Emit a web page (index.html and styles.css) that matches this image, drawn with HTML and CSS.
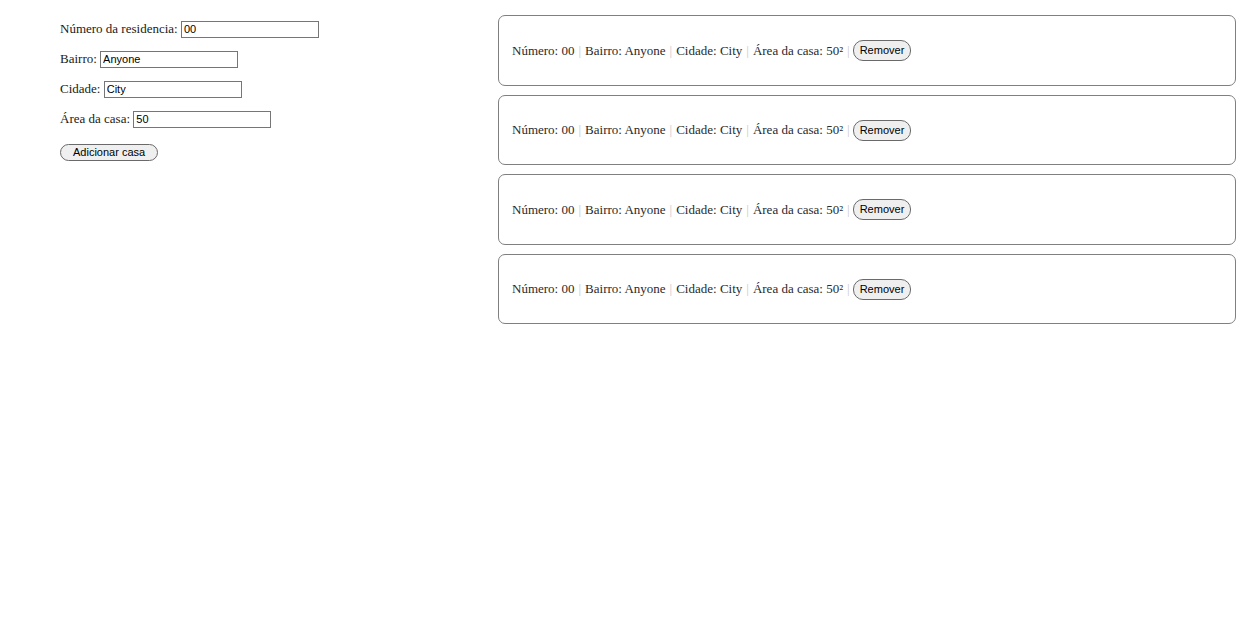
FILE: index.html
```html
<!DOCTYPE html>
<html lang="pt-BR">
<head>
<meta charset="utf-8">
<title>Casas</title>
<link rel="stylesheet" href="styles.css">
</head>
<body>
<div class="page">
  <form class="form">
    <p class="row"><label>Número da residencia: <input class="field" type="text" value="00"></label></p>
    <p class="row"><label>Bairro: <input class="field" type="text" value="Anyone"></label></p>
    <p class="row"><label>Cidade: <input class="field" type="text" value="City"></label></p>
    <p class="row"><label>Área da casa: <input class="field" type="text" value="50"></label></p>
    <p class="row row-btn"><button class="btn btn-add" type="button">Adicionar casa</button></p>
  </form>
  <div class="list">
    <div class="card"><span>Número: 00</span><span class="sep">|</span><span>Bairro: Anyone</span><span class="sep">|</span><span>Cidade: City</span><span class="sep">|</span><span>Área da casa: 50²</span><span class="sep sep-last">|</span><button class="btn" type="button">Remover</button></div>
    <div class="card"><span>Número: 00</span><span class="sep">|</span><span>Bairro: Anyone</span><span class="sep">|</span><span>Cidade: City</span><span class="sep">|</span><span>Área da casa: 50²</span><span class="sep sep-last">|</span><button class="btn" type="button">Remover</button></div>
    <div class="card"><span>Número: 00</span><span class="sep">|</span><span>Bairro: Anyone</span><span class="sep">|</span><span>Cidade: City</span><span class="sep">|</span><span>Área da casa: 50²</span><span class="sep sep-last">|</span><button class="btn" type="button">Remover</button></div>
    <div class="card"><span>Número: 00</span><span class="sep">|</span><span>Bairro: Anyone</span><span class="sep">|</span><span>Cidade: City</span><span class="sep">|</span><span>Área da casa: 50²</span><span class="sep sep-last">|</span><button class="btn" type="button">Remover</button></div>
  </div>
</div>
</body>
</html>
```
FILE: styles.css
```css
html, body {
  margin: 0;
  padding: 0;
  background: #fff;
}
body {
  font-family: "Liberation Serif", "Times New Roman", serif;
  font-size: 13px;
  color: #1a1a1a;
}
.page {
  display: flex;
  align-items: flex-start;
  padding: 15px 5px 0 0;
}
.form {
  width: 438px;
  padding-left: 60px;
  flex-shrink: 0;
}
.row {
  margin: 0 0 12.5px 0;
  line-height: 17px;
}
.row:first-child {
  margin-top: 5px;
}
.row-btn {
  margin-top: 15px;
}
.field {
  font-family: "Liberation Sans", Arial, sans-serif;
  font-size: 11px;
  color: #000;
  width: 132px;
  height: 13px;
  padding: 1px 2px;
  border: 1px solid #767676;
  border-radius: 0;
  vertical-align: baseline;
  margin: 0;
}
.btn {
  font-family: "Liberation Sans", Arial, sans-serif;
  font-size: 11px;
  color: #000;
  background: #efefef;
  border: 1px solid #6a6a6a;
  border-radius: 10px;
  padding: 3px 6px;
  margin: 0;
  line-height: 13px;
}
.btn-add {
  padding: 1px 12px 1px 12px;
  border-radius: 9px;
}
.list {
  flex: 1;
  display: flex;
  flex-direction: column;
  gap: 9px;
}
.card {
  box-sizing: border-box;
  height: 70.5px;
  border: 1.5px solid #808080;
  border-radius: 7px;
  display: flex;
  align-items: center;
  padding: 1px 13px 0 13px;
  color: #2a2a2a;
}
.sep {
  color: #c8c8c8;
  padding: 0 4px;
}
.sep-last {
  padding-right: 3px;
}
```
